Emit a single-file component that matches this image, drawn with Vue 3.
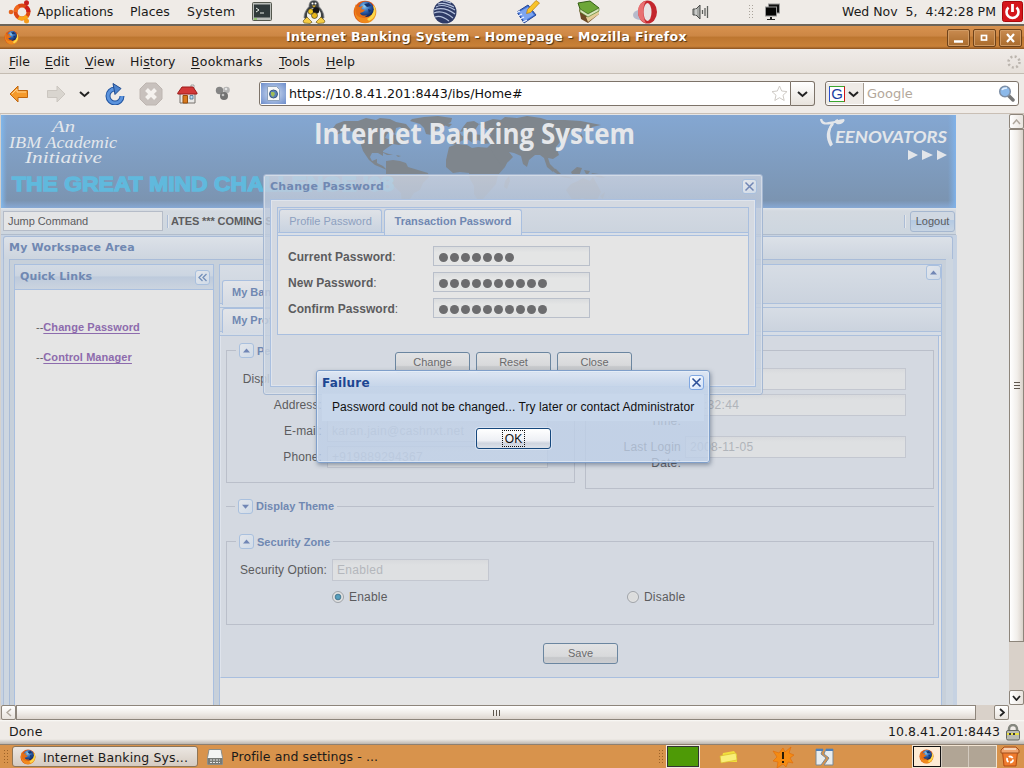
<script setup>
const menus = [
  ['F', 'ile', 'm-file'], ['E', 'dit', 'm-edit'], ['V', 'iew', 'm-view'],
  ['Hi', 'story', 'm-history'], ['B', 'ookmarks', 'm-book'], ['T', 'ools', 'm-tools'], ['H', 'elp', 'm-help']
]
const passwords = [
  { label: 'Current Password', dots: 7 },
  { label: 'New Password', dots: 10 },
  { label: 'Confirm Password', dots: 10 }
]
const personal = [
  { label: 'Display Name:', value: '' },
  { label: 'Address:', value: '' },
  { label: 'E-mail:', value: 'karan.jain@cashnxt.net' },
  { label: 'Phone:', value: '+919889294367' }
]
</script>

<template>
  <div class="screen">
    <svg class="defs" width="0" height="0" aria-hidden="true">
      <defs>
        <radialGradient id="globe" cx=".4" cy=".3" r=".7">
          <stop offset="0" stop-color="#8fd0f2" /><stop offset=".5" stop-color="#2f66b4" /><stop offset="1" stop-color="#0c2560" />
        </radialGradient>
        <linearGradient id="fox" x1="0" y1="0" x2="1" y2="1">
          <stop offset="0" stop-color="#e2661a" /><stop offset=".55" stop-color="#d8480f" /><stop offset="1" stop-color="#fbd13c" />
        </linearGradient>
        <symbol id="firefox" viewBox="0 0 24 24">
          <circle cx="12" cy="12" r="11.3" fill="url(#fox)" />
          <path d="M3 4C1 8 1 15 4 19c4 5 11 5 15 1 4-4 5-9 2-14-1 5-2 9-6 11-5 2-10-1-11-6z" fill="#f08a1d" />
          <path d="M16 21c5-2 8-7 6-14l-2-2c1 5 0 11-6 14z" fill="#fcd84a" />
          <circle cx="13" cy="9.3" r="7.7" fill="url(#globe)" />
          <path d="M3 6l3 1 4-1-2 3 4 1-2 2-3 1c1 3 5 3 7 2-3 4-9 3-11-1C2 11 2 8 3 6z" fill="#e56e16" />
          <path d="M11 4l5-1 2 3-4 1zM15 9l3 1-2 3z" fill="#14336c" />
        </symbol>
      </defs>
    </svg>

    <!-- Desktop panel -->
    <header class="panel">
      <svg class="ubuntu" width="24" height="24" viewBox="0 0 24 24">
        <circle cx="14" cy="12" r="6.500" fill="none" stroke="#dd4814" stroke-width="4" />
        <path d="M7.500 12a6.500 6.500 0 0 1 3.300-5.600" fill="none" stroke="#f0681c" stroke-width="4" />
        <path d="M10.500 17.500a6.500 6.500 0 0 0 8.500-1.500" fill="none" stroke="#f9a61a" stroke-width="4" />
        <path d="M20.500 12a6.500 6.500 0 0 0-2.800-5.300" fill="none" stroke="#cc1f1a" stroke-width="4" />
        <circle cx="3" cy="12" r="2.300" fill="#e4631c" /><circle cx="18.500" cy="2.700" r="2.500" fill="#c8201c" /><circle cx="18.500" cy="21" r="2.500" fill="#f59b1c" />
      </svg>
      <span class="p-app">Applications</span><span class="p-places">Places</span><span class="p-system">System</span>
      <svg class="i-term" width="20" height="20" viewBox="0 0 20 20">
        <rect x=".5" y=".5" width="19" height="18" rx="1" fill="#b9bcb8" stroke="#55584f" /><rect x="2" y="2.500" width="16" height="13" fill="#30393a" />
        <path d="M4 6l3 2-3 2M8 11h4" fill="none" stroke="#e8eee8" stroke-width="1" /><path d="M2 17h3" stroke="#6fce2d" />
      </svg>
      <svg class="i-tux" width="24" height="24" viewBox="0 0 24 24">
        <path d="M12 .5c4 0 5 3 5 6 3 3 5 7 5 11l-5 5H7l-5-5c0-4 2-8 5-11 0-3 1-6 5-6z" fill="#3e4245" stroke="#85888a" stroke-width=".8" />
        <path d="M5 15c0-4 3-7 7-7s7 3 7 7-3 8-7 8-7-4-7-8z" fill="#f5f3ea" />
        <circle cx="10.500" cy="3.500" r="1" fill="#fff" /><circle cx="13.500" cy="3.500" r="1" fill="#fff" /><path d="M10 5.500h4l-2 2z" fill="#e0b020" />
        <circle cx="8.800" cy="11.500" r="2.800" fill="#f1c51c" stroke="#222" stroke-width=".6" /><circle cx="14" cy="10.500" r="3.200" fill="#151515" /><circle cx="12.500" cy="15.500" r="3" fill="#e8b71b" stroke="#222" stroke-width=".6" />
        <path d="M1 21l4-4 5 5-2 1.500-6-.5zM23 21l-4-4-5 5 2 1.500 6-.5z" fill="#f6cc42" stroke="#5e4a10" stroke-width=".6" />
      </svg>
      <svg class="i-fox" width="24" height="24"><use href="#firefox" /></svg>
      <svg class="i-eclipse" width="24" height="24" viewBox="0 0 24 24">
        <circle cx="12" cy="12" r="11.500" fill="#2e3b67" />
        <path d="M3 7c5-3 12-1 19 3M1 10c7-3 14-1 21 4M1 13c7-3 13 0 19 5M2 17c5-2 9 0 14 4M5 4c5-2 10 0 16 3M10 1c3 0 5 1 8 2" fill="none" stroke="#b6c3dd" stroke-width="1.100" />
      </svg>
      <svg class="i-note" width="24" height="24" viewBox="0 0 24 24">
        <path d="M1 12l11-7 8 10-12 8z" fill="#3c6fd6" stroke="#264694" /><path d="M3 12l9-5 6 8-10 6z" fill="#7da5f0" />
        <path d="M0 13l4-2M2 16l4-2M4 19l4-2M7 22l4-2" stroke="#eef3ff" stroke-width="1.300" /><path d="M20 .5l3.500 2.500-9 9.500-4 1 1-4z" fill="#f8c328" stroke="#b77b10" stroke-width=".7" />
      </svg>
      <svg class="i-books" width="24" height="24" viewBox="0 0 24 24">
        <path d="M2 9l8 5 12-5v5l-11 9-7-4z" fill="#6e4a26" /><path d="M9 17l13-6v3l-11 8z" fill="#e4cd98" />
        <path d="M1 3l12-2 9 7-11 6-8-5z" fill="#6da637" stroke="#355f16" /><path d="M3 9l8 5 11-6v3l-11 6-8-5z" fill="#d8e4bc" stroke="#4b7b20" stroke-width=".6" />
      </svg>
      <svg class="i-opera" width="24" height="24" viewBox="0 0 24 24">
        <ellipse cx="7" cy="15" rx="7" ry="5" fill="#a8aec5" opacity=".8" /><ellipse cx="14.500" cy="12" rx="9.500" ry="11.500" fill="#c3262d" />
        <ellipse cx="14.500" cy="12" rx="4" ry="9" fill="#e9e4e4" /><path d="M13 1c-6 1-8 6-8 11s3 10 8 11c-3-4-4-17 0-22z" fill="#e97172" />
      </svg>
      <svg class="i-vol" width="17" height="16" viewBox="0 0 17 16">
        <path d="M1 5h3l4-4v14l-4-4H1z" fill="#a6a8a5" stroke="#4b4d4a" /><path d="M4 5v6" stroke="#eee" /><path d="M10.500 6v4M13 4v8M15.500 2v12" stroke="#5e605d" stroke-width="1.300" />
      </svg>
      <i class="dots"></i>
      <svg class="i-net" width="17" height="18" viewBox="0 0 17 18">
        <rect x="4.500" y="1" width="11" height="9" fill="#111" stroke="#999" /><rect x="1.500" y="4" width="11" height="9" fill="#050505" stroke="#999" /><path d="M6 14h2v2h3v1H3v-1h3z" fill="#222" />
      </svg>
      <span class="clock">Wed Nov&nbsp; 5,&nbsp; 4:42:28 PM</span>
      <svg class="i-power" width="22" height="22" viewBox="0 0 22 22">
        <rect x=".5" y=".5" width="20" height="20" rx="2" fill="#d4161b" stroke="#a8090d" /><path d="M6.500 6.500a6 6 0 1 0 8 0" fill="none" stroke="#fff" stroke-width="2.600" /><path d="M10.500 3v8" stroke="#fff" stroke-width="2.800" />
      </svg>
    </header>

    <!-- Window title -->
    <div class="titlebar">
      <svg class="t-fox" width="15" height="15"><use href="#firefox" /></svg>
      <span class="t-text">Internet Banking System - Homepage - Mozilla Firefox</span>
      <div class="t-btns">
        <b><svg width="21" height="16"><path d="M6 11.500h9" stroke="#fff" stroke-width="2.500" /></svg></b>
        <b><svg width="21" height="16"><rect x="7.500" y="5.500" width="5" height="4.500" fill="none" stroke="#fff" stroke-width="1.700" /></svg></b>
        <b><svg width="21" height="16"><path d="M7 4l7 8M14 4l-7 8" stroke="#fff" stroke-width="2.200" /></svg></b>
      </div>
    </div>

    <nav class="menubar">
      <span v-for="m in menus" :key="m[2]" :class="m[2]"><template v-if="m[0] === 'Hi'">Hi<u>s</u>tory</template><template v-else><u>{{ m[0] }}</u>{{ m[1] }}</template></span>
      <svg class="throb" width="14" height="14" viewBox="0 0 14 14"><circle cx="7" cy="7" r="5.500" fill="none" stroke="#bbb5ae" stroke-width="2.500" stroke-dasharray="2 2.320" /></svg>
    </nav>

    <div class="toolbar">
      <svg class="b-back" width="20" height="18" viewBox="0 0 20 18"><path d="M1 9l8-8v4.500h9.500v7H9V17z" fill="#f59a2b" stroke="#c0660f" /><path d="M3 9l5-5v3h9" fill="none" stroke="#ffd18d" /></svg>
      <svg class="b-fwd" width="20" height="18" viewBox="0 0 20 18"><path d="M19 9l-8-8v4.500H1.500v7H11V17z" fill="#d9d5cf" stroke="#cbc6c0" /></svg>
      <svg class="b-drop" width="11" height="8" viewBox="0 0 11 8"><path d="M1 2l4.500 4L10 2" fill="none" stroke="#222" stroke-width="2" /></svg>
      <svg class="b-reload" width="20" height="22" viewBox="0 0 20 22"><path d="M17 13a7 7 0 1 1-7-7" fill="none" stroke="#2256a2" stroke-width="5" /><path d="M17 13a7 7 0 1 1-7-7" fill="none" stroke="#5b93dd" stroke-width="3" /><path d="M8 .5l8 5-6 6z" fill="#4d83cc" stroke="#204c90" /></svg>
      <svg class="b-stop" width="24" height="24" viewBox="0 0 24 24"><path d="M7 1h10l6 6v10l-6 6H7l-6-6V7z" fill="#c8c1bd" stroke="#beb6b1" /><path d="M7.500 7.500l9 9M16.500 7.500l-9 9" stroke="#f5f2ef" stroke-width="4" /></svg>
      <svg class="b-home" width="21" height="20" viewBox="0 0 21 20"><path d="M3 9h15v10H3z" fill="#e9e8e6" stroke="#77736e" /><path d="M14 1h3v6h-3z" fill="#eee" stroke="#888" stroke-width=".7" /><path d="M.8 9L5 3h11l4 6v1H.8z" fill="#d23838" stroke="#9c1b1b" /><path d="M6 11.500h4.500V19H6z" fill="#d97a1e" stroke="#964e0b" /><path d="M13 11.500h3v3.500h-3z" fill="#b8dcf2" stroke="#456d8d" stroke-width=".8" /></svg>
      <svg class="b-mol" width="16" height="16" viewBox="0 0 16 16"><circle cx="4.500" cy="4.500" r="3.700" fill="#858585" /><circle cx="11.500" cy="4" r="3.300" fill="#b4b4b4" /><circle cx="9" cy="10" r="4" fill="#727272" /><circle cx="8" cy="9" r="1.300" fill="#c2c2c2" /><circle cx="11" cy="3" r="1.300" fill="#e5e5e5" /></svg>
      <div class="urlbox">
        <i class="fav"><svg width="17" height="17" viewBox="0 0 17 17"><path d="M2.500 1.500h9l3 3v11h-12z" fill="#f7f7f7" stroke="#8da2bd" /><circle cx="8.500" cy="9" r="4" fill="#5c82b6" stroke="#39597f" /><path d="M6 7l3 0 1 2-2 3-2-2z" fill="#9ebd58" /></svg></i>
        <span>https://10.8.41.201:8443/ibs/Home#</span>
        <svg class="star" width="17" height="17" viewBox="0 0 17 17"><path d="M8.500 1l2.200 5 5.300.6-4 3.600 1.200 5.300-4.700-2.800-4.700 2.800L5 10.200 1 6.600 6.300 6z" fill="#fff" stroke="#cfcbc6" /></svg>
      </div>
      <div class="urldrop"><svg width="11" height="8" viewBox="0 0 11 8"><path d="M1 2l4.500 4L10 2" fill="none" stroke="#222" stroke-width="2" /></svg></div>
      <div class="search">
        <div class="engine"><b>G</b><svg width="11" height="8" viewBox="0 0 11 8"><path d="M1 2l4.500 4L10 2" fill="none" stroke="#222" stroke-width="2" /></svg></div>
        <span>Google</span>
        <svg class="lens" width="17" height="17" viewBox="0 0 17 17"><path d="M10 10l5 5" stroke="#777" stroke-width="3.500" stroke-linecap="round" /><circle cx="7" cy="6.500" r="5.300" fill="#8cb9ea" stroke="#7e8fa6" stroke-width="1.500" /><path d="M4 5c1-2 3-2 5-2" stroke="#e4f1ff" fill="none" stroke-width="1.500" /></svg>
      </div>
    </div>

    <!-- Browser viewport -->
    <div class="view">
      <main class="page">
        <svg class="banner" width="955" height="93" viewBox="1 115 955 93">
          <defs>
            <linearGradient id="ban" x1="0" y1="0" x2="0" y2="1"><stop offset="0" stop-color="#84a7d2" /><stop offset=".92" stop-color="#7b94b1" /><stop offset="1" stop-color="#87a9d5" /></linearGradient>
            <linearGradient id="lft"><stop offset="0" stop-color="#80b8ec" /><stop offset="1" stop-color="#80b0e2" stop-opacity="0" /></linearGradient>
            <linearGradient id="rgt"><stop offset="0" stop-color="#80b0e2" stop-opacity="0" /><stop offset="1" stop-color="#80b2ea" /></linearGradient>
          </defs>
          <rect x="1" y="115" width="955" height="93" fill="url(#ban)" />
          <rect x="1" y="115" width="6" height="93" fill="url(#lft)" /><rect x="948" y="115" width="8" height="93" fill="url(#rgt)" />
          <g fill="#7f868d">
            <path d="M336 124l8-3 14 0 8-3 10 2 4-2 10 1 6 3 10 2 5 6-6 1-5-4-4 1-1 6-3-3-5 3-2 4 6 2 3-6 7 4 6 5-8 2-6-1-6 4-4 3 0 5-5-3-6 0-2 4 2 4 5-2 0 4 6 3 4 4-12-5-6-5-6-9-2-6 1-6-6-6-9-3-6 3-5 2 3-4-6-3z" />
            <path d="M412 119l12-2 14-1 14 2-1 4-7 4-7 3-6 6-5-1-2-6-4-4-10-3z" />
            <path d="M386 161l7-1 7 1 6 2 2 4 10 3 10 3 1 4-6 6-3 7-6 3-4 6-3 6-5 2-1-14-9-9-6-8z" />
            <path d="M463 127l4-5 7-1 5 3-4 6-4 6-4-1-2-4-5 1zM450 141l3-6 6-4 3 5 9-2 12 1 4 3 6-2 1 6-9 2-7-4-5 3-6-4-6 2-4 4-6-1z" />
            <path d="M380 151l9 3 4 1-6 0zM396 155l5 1-3 1zM446 123l6 1-3 3-5-2z" />
            <path d="M449 147l8-3 10 1 5 3 6-1 13 1 5 8 4 6 8-1-3 6-7 8-2 9-7 8-6 7-5 1-4-6 0-8-4-7-1-6-9-1-7 1-7-6 0-7z" />
            <path d="M479 124l14-5 8 1 4-3 12 1 10-2 14 2 6 2 18 0 16 1 20 4-9 2-4 5-4 0-2-4-10 2-4 6-3 6-5 0-4 5 3 8-6 4-5-1 2 6 4 4-1 4-6-5-3-9-4-3-5 0-6 5-2 7-4-3-2-8-7-3-5-1 4 5-5 5-7 3-5-7-4-7-5-3 4-4-8-2 3-5 5-2-4-5z" />
            <path d="M550 167l6 2 6 6 8 2 4 2-12-2-8-5zM571 172l6-5 5 1-3 8-6 0zM584 170l6 1-3 5zM591 173l8 1 6 4-8-1zM575 141l4-3 2-5 2 4-3 5zM566 190l5-6 7-3 5-3 7 3 3-4 5 9 3 6-5 10-8 0-5-4-10 3z" />
            <path d="M505 181l4-5 1 5-3 8-3-2zM600 196l5-4-2 7z" />
          </g>
          <g fill="#e3e7ec" class="script">
            <text x="52" y="132" font-size="16" textLength="23" lengthAdjust="spacingAndGlyphs">An</text>
            <text x="9" y="148" font-size="16" textLength="108" lengthAdjust="spacingAndGlyphs">IBM Academic</text>
            <text x="25" y="163" font-size="16" textLength="77" lengthAdjust="spacingAndGlyphs">Initiative</text>
          </g>
          <text class="sans heavy" x="12" y="190.500" font-size="21" textLength="382" lengthAdjust="spacingAndGlyphs" fill="#60b9dd" stroke="#60b9dd" stroke-width="1.300">THE GREAT MIND CHALLENGE '08</text>
          <text class="open" x="314" y="144" font-size="28" textLength="321" lengthAdjust="spacingAndGlyphs" fill="#e5e7ea">Internet Banking System</text>
          <g fill="#e3e6ea" class="teen">
            <path d="M821 119c1 7 8 4 14 3s11-4 7 0c-4 3-9-1-4-2M833 123c-5 6-5 14-1 22" fill="none" stroke="#e3e6ea" stroke-width="2.200" />
            <path d="M833 124c-7 7-6 15-2 22" fill="none" stroke="#e3e6ea" stroke-width="2" />
            <text class="teen" x="835" y="143" font-size="17" textLength="112" lengthAdjust="spacingAndGlyphs">EENOVATORS</text>
            <path d="M908 150l10 5-10 5zM922 150l11 5-11 5zM937 150l10 5-10 5z" />
          </g>
        </svg>

        <div class="cmdbar">
          <div class="jump">Jump Command</div><i class="sep"></i>
          <div class="marquee">ATES *** COMING SOON</div><i class="sep"></i>
          <div class="logout">Logout</div>
        </div>

        <section class="work">
          <h2>My Workspace Area</h2>
          <div class="split">
            <aside class="quick">
              <h3><span>Quick Links</span><em class="tool"><svg width="13" height="13"><path d="M6.500 3L3 6.500 6.500 10M10.500 3L7 6.500l3.500 3.500" fill="none" stroke="#7490ba" stroke-width="1.300" /></svg></em></h3>
              <p>--<a>Change Password</a></p>
              <p>--<a>Control Manager</a></p>
            </aside>
            <div class="center">
              <div class="strip top"><span class="tab">My Banking</span><em class="tool"><svg width="13" height="13"><path d="M3 8.500l3.500-4 3.500 4z" fill="#7186b5" /></svg></em></div>
              <div class="strip second"><span class="tab">My Profile</span></div>
              <div class="profile">
                <div class="cols">
                  <fieldset class="fs left">
                    <div class="legend"><em class="tool"><svg width="13" height="13"><path d="M3 8.500l3.500-4 3.500 4z" fill="#7186b5" /></svg></em>Personal Details</div>
                    <div v-for="f in personal" :key="f.label" class="row"><label>{{ f.label }}</label><span class="field">{{ f.value }}</span></div>
                  </fieldset>
                  <fieldset class="fs right">
                    <div class="row"><label>User Type:</label><span class="field"></span></div>
                    <div class="row tall"><label>Last Login Time:</label><span class="field">16:32:44</span></div>
                    <div class="row tall"><label>Last Login Date:</label><span class="field">2008-11-05</span></div>
                  </fieldset>
                </div>
                <div class="theme"><div class="legend"><em class="tool"><svg width="13" height="13"><path d="M3 4.800l3.500 4 3.500-4z" fill="#7186b5" /></svg></em>Display Theme</div></div>
                <fieldset class="fs zone">
                  <div class="legend"><em class="tool"><svg width="13" height="13"><path d="M3 8.500l3.500-4 3.500 4z" fill="#7186b5" /></svg></em>Security Zone</div>
                  <div class="row"><label>Security Option:</label><span class="field">Enabled</span></div>
                  <div class="radios">
                    <span class="opt"><i class="radio on"></i>Enable</span><span class="opt"><i class="radio"></i>Disable</span>
                  </div>
                </fieldset>
                <div class="btn save">Save</div>
              </div>
            </div>
          </div>
        </section>
      </main>

      <div class="vscroll">
        <b><svg width="9" height="6"><path d="M1 5l3.500-4L8 5" fill="none" stroke="#b0a89e" stroke-width="1.500" /></svg></b>
        <div class="vthumb"><i></i><i></i><i></i></div>
        <b class="down"><svg width="9" height="6"><path d="M1 1l3.500 4L8 1" fill="none" stroke="#222" stroke-width="1.800" /></svg></b>
      </div>
    </div>

    <div class="hscroll">
      <b class="hl"><svg width="6" height="9"><path d="M5 1L1 4.500 5 8" fill="none" stroke="#b0a89e" stroke-width="1.500" /></svg></b>
      <div class="hthumb"><i></i><i></i><i></i></div>
      <b class="hr"><svg width="6" height="9"><path d="M1 1l4 3.500L1 8" fill="none" stroke="#222" stroke-width="1.800" /></svg></b>
    </div>

    <footer class="status"><span class="done">Done</span><span class="host">10.8.41.201:8443</span>
      <svg width="16" height="17" viewBox="0 0 16 17"><path d="M4 8V5a4 4 0 0 1 8 0v3" fill="none" stroke="#85877f" stroke-width="2.500" /><rect x="1.500" y="6.500" width="13" height="9.500" rx="1.500" fill="#b9bbb2" stroke="#64665f" /><path d="M2 9h12v2H2z" fill="#eadf3c" /><path d="M4 9h2v2H4zM8 9h2v2H8z" fill="#3a3a2c" /></svg>
    </footer>

    <div class="taskbar">
      <i class="dots tdots"></i>
      <div class="task"><svg width="16" height="16"><use href="#firefox" /></svg><span>Internet Banking Sys...</span></div>
      <svg class="i-prof" width="16" height="16" viewBox="0 0 16 16"><path d="M2 .5h12l1.500 8v7H.5v-7z" fill="#f4f5f3" stroke="#8b8d88" /><path d="M1 9h14v6H1z" fill="#777a76" /><path d="M3 11h10M3 13.500h10" stroke="#e8e8e8" stroke-dasharray="2 1" /></svg>
      <span class="proftext">Profile and settings - ...</span>
      <i class="dots d2"></i>
      <i class="green"></i>
      <svg class="i-folder" width="19" height="14" viewBox="0 0 19 14"><path d="M4 3l11-2 3 4v7H2z" fill="#f2df3c" /><path d="M1 6l16-3 1 7-16 3z" fill="#f9ee78" stroke="#d8bb28" stroke-width=".7" /></svg>
      <svg class="i-warn" width="22" height="22" viewBox="0 0 22 22"><path d="M11 2l2 4 6-5-2 6 5 2-4 3 3 5-5-1-2 5-3-3-6 4 1-6-5-1 4-4-4-6 6 2z" fill="#f58b13" stroke="#e06a08" stroke-width=".6" /><path d="M11 6v7M11 15v2" stroke="#2a1b05" stroke-width="2" /></svg>
      <svg class="i-img" width="19" height="18" viewBox="0 0 19 18"><path d="M1 1h7l-2 5 5 4-5 7H1zM11 1h7v16h-9l5-7-5-4z" fill="#e9edef" stroke="#7b8994" /><path d="M1 2h7M11 2h7" stroke="#4f7fb8" stroke-width="2" /></svg>
      <div class="pager"><i class="cur"><svg width="15" height="15"><use href="#firefox" /></svg></i><i></i><i></i></div>
      <svg class="i-trash" width="20" height="21" viewBox="0 0 20 21"><path d="M2.500 6h15l-1.500 14H4z" fill="#ef7b2e" stroke="#b34b12" /><path d="M1 4l3-3h12l3 3v3H1z" fill="#f0a46e" stroke="#a3501c" /><path d="M4 3h12" stroke="#fbe3d0" stroke-width="1.500" /><circle cx="10" cy="13.500" r="3" fill="none" stroke="#fff" stroke-width="1.800" stroke-dasharray="4.500 1.700" /></svg>
    </div>

    <!-- Floating dialogs -->
    <div class="win pw">
      <div class="whead"><span>Change Password</span><em class="tool"><svg width="13" height="13"><path d="M2.500 2.500l8 8M10.500 2.500l-8 8" stroke="#7186b5" stroke-width="1.500" /></svg></em></div>
      <div class="wbody">
        <div class="tabs">
          <div class="tstrip"><span class="t1">Profile Password</span><span class="t2">Transaction Password</span></div>
          <div class="tbody">
            <div v-for="p in passwords" :key="p.label" class="prow"><label><b>{{ p.label }}</b>:</label><div class="pin"><i v-for="n in p.dots" :key="n"></i></div></div>
          </div>
        </div>
        <div class="wbtns"><div class="btn">Change</div><div class="btn">Reset</div><div class="btn">Close</div></div>
      </div>
    </div>

    <div class="win fail">
      <div class="fhead"><span>Failure</span><em class="tool"><svg width="13" height="13"><path d="M2.500 2.500l8 8M10.500 2.500l-8 8" stroke="#2c4f98" stroke-width="1.600" /></svg></em></div>
      <div class="fmsg">Password could not be changed... Try later or contact Administrator</div>
      <div class="ffoot"><div class="btn ok"><span>OK</span></div></div>
    </div>
  </div>
</template>

<style>
html, body { margin: 0; background: #efebe7; overflow: hidden; }
</style>

<style scoped>
* { box-sizing: border-box; }
i, em { font-style: normal; }
svg { display: block; flex: none; }
.defs { position: absolute; }
.screen { position: relative; width: 1024px; height: 768px; overflow: hidden; display: flex; flex-direction: column; font: 12.5px/16px "DejaVu Sans", sans-serif; color: #1b1a19; white-space: nowrap; }

.panel { height: 26px; flex: none; display: flex; align-items: center; background: #efebe7; border-bottom: 2px solid #6c6459; }
.ubuntu { margin-left: 8px; }
.p-app { margin-left: 5px; width: 93px; }
.p-places { width: 57px; }
.p-system { width: 65px; letter-spacing: .3px; }
.i-tux { margin-left: 30px; }
.i-fox { margin-left: 27px; }
.i-eclipse { margin-left: 56px; }
.i-note { margin-left: 59px; }
.i-books { margin-left: 37px; }
.i-opera { margin-left: 32px; }
.i-vol { margin-left: 35px; }
.dots { width: 6px; height: 16px; margin-left: 39px; background: radial-gradient(circle, #aaa49c 35%, transparent 40%) 0 0 / 3px 3px; }
.i-net { margin-left: 10px; }
.clock { margin-left: 61px; width: 160px; }

.titlebar { height: 23px; flex: none; display: flex; align-items: center; background: linear-gradient(#d8924f 0, #cd8745 42%, #bd7630 50%, #c98138 88%, #8a5220 100%); color: #fff; }
.t-fox { margin-left: 4px; }
.t-text { margin-left: 267px; width: 410px; font-weight: bold; font-size: 12.5px; letter-spacing: .36px; text-shadow: 1px 1px 1px #4a3214; padding-bottom: 2px; }
.t-btns { margin-left: auto; margin-right: 2px; display: flex; gap: 3px; }
.t-btns b { width: 23px; height: 18px; border: 1px solid #6e421a; border-radius: 2px; background: linear-gradient(#c98b50, #a96b2c); box-shadow: inset 0 0 0 1px #d09a63; }

.menubar { height: 25px; flex: none; display: flex; align-items: center; background: linear-gradient(#efebe8, #e6e0da); border-bottom: 1px solid #c4bcb2; padding-top: 1px; }
.menubar u { text-underline-offset: 2px; }
.m-file { margin-left: 9px; width: 36px; }
.m-edit { width: 40px; letter-spacing: .1px; }
.m-view { width: 45px; letter-spacing: .1px; }
.m-history { width: 61px; letter-spacing: .15px; }
.m-book { width: 88px; letter-spacing: .2px; }
.m-tools { width: 47px; }
.m-help { letter-spacing: .15px; }
.throb { margin-left: auto; margin-right: 3px; }

.toolbar { height: 40px; flex: none; display: flex; align-items: center; background: #efebe7; border-bottom: 1px solid #c9bfb5; }
.b-back { margin-left: 9px; }
.b-fwd { margin-left: 17px; }
.b-drop { margin-left: 13px; }
.b-reload { margin-left: 15px; }
.b-stop { margin-left: 14px; }
.b-home { margin-left: 14px; }
.b-mol { margin-left: 17px; }
.urlbox { margin-left: 28px; width: 532px; height: 25px; border: 1px solid #7d7369; border-radius: 3px 0 0 3px; background: #fff; display: flex; align-items: center; color: #111; }
.fav { width: 25px; height: 21px; margin: 0 3px 0 1px; background: radial-gradient(#d5e1f4, #6b8cca); display: flex; align-items: center; justify-content: center; }
.urlbox span { font-size: 12.7px; }
.star { margin-left: auto; margin-right: 2px; }
.urldrop { width: 24px; height: 25px; border: 1px solid #7d7369; border-left: 0; border-radius: 0 3px 3px 0; background: linear-gradient(#fff, #e8e3dd); display: flex; align-items: center; justify-content: center; }
.search { margin-left: 10px; width: 194px; height: 25px; border: 1px solid #7d7369; border-radius: 3px; background: #fff; display: flex; align-items: center; color: #b3a89b; }
.engine { width: 38px; height: 21px; padding-left: 3px; display: flex; align-items: center; gap: 3px; background: #efebe7; border-right: 1px solid #a59c92; }
.engine b { width: 16px; height: 16px; border: 1px solid; border-color: #3aa52f #d01515 #3aa52f #2a4fd0; background: #fff; color: #1c3ea0; font: 15px/14px "Liberation Sans", sans-serif; text-align: center; }
.search span { margin-left: 3px; font-size: 13px; }
.lens { margin-left: auto; margin-right: 3px; }

.view { height: 591px; flex: none; display: flex; background: #e5e5e5; border-left: 1px solid #d5d2ce; overflow: hidden; font-family: "Liberation Sans", Arial, sans-serif; font-size: 11px; color: #5c5c5e; }
.page { width: 1008px; height: 591px; padding-top: 1px; overflow: hidden; }
.script { font-family: "Liberation Serif", serif; font-style: italic; }
.sans { font-family: "Liberation Sans", sans-serif; font-weight: bold; }
.open { font-family: "Open Sans", sans-serif; font-weight: bold; }
.teen { font-family: Lato, sans-serif; font-weight: bold; font-style: italic; }
.cmdbar { width: 955px; height: 27px; padding: 0 1px 0 2px; display: flex; align-items: center; background: linear-gradient(#dfe4ea, #d3d9e0 3px, #cdd6df); border-bottom: 1px solid #b1bccb; }
.jump { width: 160px; height: 20px; border: 1px solid #b5bcc8; background: #e4e5e6; padding-left: 4px; line-height: 19px; letter-spacing: -.05px; }
.sep { width: 2px; height: 13px; margin: 0 3px 0 4px; border-left: 1px solid #acbdd6; border-right: 1px solid #e3e6ea; }
.marquee { width: 729px; margin-left: -1px; font-weight: bold; overflow: hidden; letter-spacing: -.1px; }
.logout { margin-left: auto; width: 45px; height: 21px; border: 1px solid #a5b7d0; border-radius: 3px; background: linear-gradient(#d0d8e2 40%, #b4cae3 45%, #c7d4e3); text-align: center; line-height: 19px; }
.work { width: 956px; height: 480px; padding: 1px 4px 0 2px; background: #c6d2e2; }
h2, h3 { margin: 0; font: bold 11px/14px "DejaVu Sans", sans-serif; color: #7088b2; }
.work h2 { height: 23px; padding: 4px 0 0 5px; border: 1px solid #a9bcd8; border-bottom: 0; border-radius: 3px 3px 0 0; background: linear-gradient(#dce1e8, #cdd5df); letter-spacing: .2px; }
.split { height: 456px; padding: 4px 3px 0 4px; margin: 0; border: solid #acbed8; border-width: 1px 7px 0 7px; border-image: linear-gradient(90deg, #aebfd8 0 1px, #cdd6e0 1px 6px, #a9bcd8 6px 943px, #cdd6e0 943px) 7; background: #c7d0da; display: flex; gap: 5px; }
.quick { width: 200px; height: 460px; border: 1px solid #a9bfdf; background: #e5e5e5; }
.quick h3 { height: 25px; display: flex; align-items: center; justify-content: space-between; padding: 0 3px 0 5px; margin-bottom: 30px; border-bottom: 1px solid #a9bfdf; background: linear-gradient(#d3dae4, #cbd5e1 45%, #bdcadc 50%, #cbd4df); letter-spacing: .1px; }
.quick p { margin: 0 0 16px 21px; line-height: 14px; }
.quick a { color: #8d6bad; font-weight: bold; text-decoration: underline; text-underline-offset: 2px; letter-spacing: .08px; }
.tool { flex: none; width: 15px; height: 15px; border: 1px solid #a9c0de; border-radius: 3px; background: linear-gradient(135deg, #e3e6eb, #d0dbe8); display: flex; align-items: center; justify-content: center; }
.center { width: 723px; height: 460px; border: 1px solid #a9bfdf; background: #e5e5e5; }
.strip { display: flex; align-items: flex-end; border-bottom: 1px solid #acc0dc; background: linear-gradient(#d7dde5, #cbd3de calc(100% - 4px), #acc0dc calc(100% - 4px) calc(100% - 3px), #d6dde6 calc(100% - 3px)); }
.top { height: 43px; padding-bottom: 2px; }
.second { height: 28px; padding-bottom: 2px; }
.tab { margin-left: 2px; width: 80px; height: 25px; border: 1px solid #a9bfdf; border-bottom: 0; border-radius: 3px 3px 0 0; background: linear-gradient(#e3e5e9, #d5dbe4); padding-left: 9px; line-height: 22px; font-weight: bold; color: #7088b2; }
.top .tool { margin-left: auto; align-self: flex-start; }
.profile { height: 342px; margin-left: 0; margin-right: 2px; padding: 14px 3px 0 5px; background: #d4d9e1; border-bottom: 1px solid #a9bfdf; border-left: 1px solid #dfe4ec; border-right: 1px solid #a9bfdf; }
.cols { display: flex; gap: 10px; height: 140px; align-items: flex-start; }
.fs { margin: 0; padding: 17px 0 0; border: 1px solid #babfca; min-width: 0; }
.left { width: 349px; height: 133px; }
.right { width: 349px; height: 139px; padding-top: 17px; }
.legend { height: 15px; display: flex; align-items: center; gap: 3px; width: max-content; margin: -25px 0 10px 9px; padding: 0 3px 0 3px; background: #d4d9e1; font-weight: bold; color: #7088b2; letter-spacing: .03px; }
.row { display: flex; align-items: flex-start; height: 26px; font-size: 12px; line-height: 16px; }
.row label { text-align: right; padding-top: 3px; }
.left label { width: 95px; letter-spacing: .1px; }
.field { width: 221px; height: 22px; margin-left: 5px; padding-left: 4px; border: 1px solid #c3c7d0; background: linear-gradient(#d8dadd, #dee0e2 25%); color: #b4b7bc; line-height: 20px; letter-spacing: .3px; }
.left .field, .right .field { color: #b0b4ba; }
.right .row label { width: 95px; padding-left: 30px; white-space: normal; letter-spacing: .2px; }
.right .field { margin-left: 4px; }
.right .tall { height: 42px; }
.theme { position: relative; height: 16px; margin-top: 8px; width: 708px; display: flex; align-items: center; }
.theme::before { content: ""; width: 9px; border-top: 1px solid #babfca; }
.theme::after { content: ""; flex: 1; border-top: 1px solid #babfca; }
.theme .legend { margin: 0; padding-left: 3px; }
.zone { width: 708px; height: 84px; margin-top: 27px; padding-top: 18px; }
.zone .row label { width: 100px; letter-spacing: .1px; }
.zone .field { width: 157px; margin-left: 5px; }
.zone .legend { margin-top: -26px; margin-bottom: 10px; }
.radios { display: flex; margin: 3px 0 0 105px; font-size: 12px; line-height: 14px; padding-top: 2px; }
.opt { width: 295px; display: flex; align-items: center; gap: 5px; letter-spacing: .2px; }
.radio { width: 12px; height: 12px; border-radius: 50%; border: 1px solid #a0a4a9; background: #dcdddd; box-shadow: inset 0 0 0 1px #e3e3e3; }
.radio.on { background: radial-gradient(#57a1bf 20%, #4c7c95 40%, #dcdddd 52%); }
.btn { width: 75px; height: 21px; border: 1px solid #6b86a0; border-radius: 3px; background: linear-gradient(#e2e3e4 0, #d8d9db 65%, #c6c8cb 72%, #cccdd0); color: #6a6a6c; text-align: center; font: 11px/19px "Liberation Sans", sans-serif; }
.save { margin: 18px 0 0 317px; }

.vscroll { width: 15px; height: 591px; background: #d9d1c9; display: flex; flex-direction: column; }
.vscroll b { height: 15px; border: 1px solid #8d857b; border-radius: 2px; background: linear-gradient(90deg, #fff, #e8e3dd); display: flex; align-items: center; justify-content: center; }
.vthumb { height: 513px; border: 1px solid #8d857b; background: linear-gradient(90deg, #fff, #f1eeea 55%, #d9d1c9); display: flex; flex-direction: column; gap: 2px; align-items: center; justify-content: center; }
.vthumb i { width: 6px; height: 1px; background: #5f574e; }
.vscroll .down { margin-top: auto; }
.hscroll { height: 15px; flex: none; padding-left: 1px; display: flex; background: linear-gradient(90deg, #d9d1c9 1009px, #efebe7 1009px); }
.hscroll b { width: 15px; border: 1px solid #8d857b; border-radius: 2px; background: linear-gradient(#fff, #e8e3dd); display: flex; align-items: center; justify-content: center; }
.hthumb { width: 960px; border: 1px solid #8d857b; background: linear-gradient(#fff, #f1eeea 50%, #ded7d0); display: flex; gap: 2px; align-items: center; justify-content: center; }
.hthumb i { height: 6px; width: 1px; background: #5f574e; }
.hscroll .hr { margin-left: 18px; }
.status { height: 24px; flex: none; display: flex; align-items: center; background: linear-gradient(#fbfaf8 0, #efebe7 2px 19px, #bcb6af); }
.done { margin-left: 9px; letter-spacing: .15px; }
.host { margin-left: auto; margin-right: 5px; letter-spacing: .02px; }
.status svg { margin-right: 3px; }
.taskbar { height: 24px; flex: none; display: flex; align-items: center; background: #d8934c; border-top: 1px solid #8d8072; }
.tdots { margin-left: 3px; background: radial-gradient(circle, #9c6228 35%, transparent 40%) 0 0 / 3px 3px; }
.task { margin-left: 3px; width: 186px; height: 21px; padding-left: 7px; display: flex; align-items: center; gap: 7px; border: 1px solid #8f7556; border-radius: 3px; background: linear-gradient(#ece7e2, #d5cbc1); }
.task span { padding-top: 2px; letter-spacing: .13px; }
.i-prof { margin-left: 9px; }
.proftext { margin-left: 8px; width: 150px; letter-spacing: .1px; }
.d2 { margin-left: 277px; background: radial-gradient(circle, #9c6228 35%, transparent 40%) 0 0 / 3px 3px; }
.green { margin-left: 2px; width: 34px; height: 23px; border: 1px solid #f2e8dc; background: #4e9a06; box-shadow: inset 0 0 0 1px #333; }
.i-folder { margin-left: 19px; }
.i-warn { margin-left: 34px; }
.i-img { margin-left: 21px; }
.pager { margin-left: 78px; height: 23px; width: 85px; border: 1px solid #f2e4d2; display: flex; }
.pager i { width: 28px; background: #b1a595; border-left: 1px solid #d3cabf; }
.pager .cur { background: #fdebd5; border: 1px solid #111; display: flex; align-items: center; justify-content: center; }
.i-trash { margin-left: 3px; }

.win { position: absolute; font-family: "Liberation Sans", Arial, sans-serif; color: #5c5c5e; }
.pw { left: 263px; top: 174px; width: 500px; height: 221px; padding: 0 6px; border: 1px solid #a4b7d2; border-radius: 3px; background: linear-gradient(rgba(204, 211, 225, .8), rgba(190, 202, 220, .82) 24px, rgba(202, 212, 224, .85)); box-shadow: inset 0 0 0 1px rgba(226, 231, 238, .6); }
.whead { height: 24px; display: flex; align-items: center; justify-content: space-between; margin: 0 -1px 0 0; font: bold 11px/14px "DejaVu Sans", sans-serif; color: #7088b2; letter-spacing: .3px; padding-bottom: 1px; }
.wbody { height: 188px; border: 1px solid #a9bfdf; box-shadow: inset 0 0 0 1px #dfe4ec; background: #d4d9e1; padding: 7px 0 0 6px; }
.tabs { width: 472px; height: 128px; border: 1px solid #a9bfdf; background: #e5e5e5; }
.tstrip { height: 28px; padding: 1px 0 0 1px; display: flex; gap: 2px; background: linear-gradient(#d3d9e2, #ccd4de 24px, #a9bfdf 24px 25px, #d9dfe7 25px); border-bottom: 1px solid #a9bfdf; }
.tstrip span { height: 23px; border: 1px solid #a9bfdf; border-bottom: 0; border-radius: 3px 3px 0 0; line-height: 22px; text-align: center; font-size: 11px; }
.t1 { width: 103px; color: #8da0c0; background: linear-gradient(#dfe2e7, #c9d3e0); }
.t2 { width: 138px; color: #7088b2; font-weight: bold; background: linear-gradient(#e4e6e9, #d9dfe7); }
.tstrip .t2 { height: 26px; }
.tbody { padding-top: 10px; }
.prow { height: 26px; display: flex; align-items: flex-start; font-size: 12px; line-height: 22px; }
.prow label { width: 145px; margin-left: 10px; letter-spacing: .05px; }
.pin { width: 157px; height: 20px; margin-top: 0; padding: 3px 0 0 5px; border: 1px solid #b9bfca; background: linear-gradient(#dadcde, #e4e5e5 30%); display: flex; align-items: center; gap: 2px; }
.pin i { width: 9px; height: 9px; border-radius: 50%; background: #6c6c6e; }
.wbtns { display: flex; gap: 6px; margin: 17px 0 0 118px; }
.fail { left: 316px; top: 370px; width: 394px; height: 93px; border: 1px solid #7f9fca; border-radius: 3px; box-shadow: 1px 2px 4px rgba(60, 75, 100, .5), inset 0 0 0 1px rgba(235, 242, 250, .6); color: #101010; background: linear-gradient(rgba(222, 231, 244, .96), rgba(196, 212, 233, .92) 16px, rgba(190, 207, 231, .8) 60px); }
.fhead { height: 23px; display: flex; align-items: center; justify-content: space-between; padding: 0 5px; font: bold 12px/14px "DejaVu Sans", sans-serif; color: #1c4692; letter-spacing: .2px; }
.fail .tool { background: linear-gradient(135deg, #fff, #cfe0f8); border-color: #7fa7e2; }
.fmsg { height: 27px; margin: 0 5px; padding: 5px 0 0 10px; background: #c8d7eb; font-size: 12px; line-height: 16px; letter-spacing: .08px; }
.ffoot { padding: 7px 0 0 159px; }
.ok { border-color: #16487d; color: #111; background: linear-gradient(#fff 0, #eef0f5 60%, #ced4df 75%, #dbe0e9); box-shadow: 0 0 0 1px rgba(240, 246, 255, .5); font-size: 12px; }
.ok span { display: inline-block; height: 17px; line-height: 16px; margin-top: 1px; padding: 0 2px; border: 1px dotted #111; vertical-align: top; }
</style>
